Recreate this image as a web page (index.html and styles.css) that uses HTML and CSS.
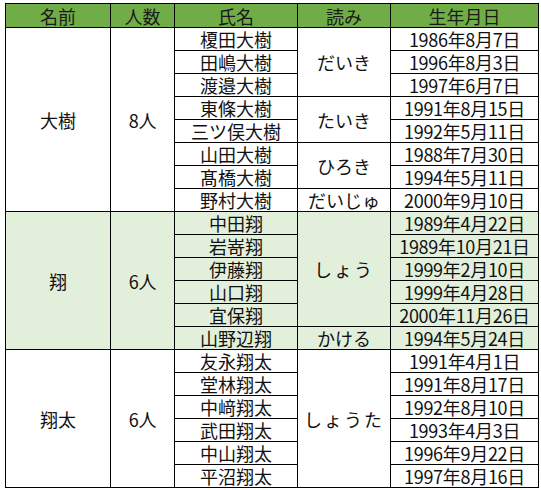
FILE: index.html
```html
<!DOCTYPE html>
<html lang="ja">
<head>
<meta charset="utf-8">
<title>名前一覧</title>
<link rel="stylesheet" href="styles.css">
</head>
<body>
<table class="roster">
  <colgroup>
    <col class="c-name">
    <col class="c-count">
    <col class="c-full">
    <col class="c-read">
    <col class="c-birth">
  </colgroup>
  <thead>
    <tr><th>名前</th><th>人数</th><th>氏名</th><th>読み</th><th>生年月日</th></tr>
  </thead>
  <tbody>
    <tr><td rowspan="8">大樹</td><td rowspan="8" class="num">8人</td><td>榎田大樹</td><td rowspan="3">だいき</td><td class="num">1986年8月7日</td></tr>
    <tr><td>田嶋大樹</td><td class="num">1996年8月3日</td></tr>
    <tr><td>渡邉大樹</td><td class="num">1997年6月7日</td></tr>
    <tr><td>東條大樹</td><td rowspan="2">たいき</td><td class="num">1991年8月15日</td></tr>
    <tr><td>三ツ俣大樹</td><td class="num">1992年5月11日</td></tr>
    <tr><td>山田大樹</td><td rowspan="2">ひろき</td><td class="num">1988年7月30日</td></tr>
    <tr><td>髙橋大樹</td><td class="num">1994年5月11日</td></tr>
    <tr><td>野村大樹</td><td>だいじゅ</td><td class="num">2000年9月10日</td></tr>
  </tbody>
  <tbody class="shaded">
    <tr><td rowspan="6">翔</td><td rowspan="6" class="num">6人</td><td>中田翔</td><td rowspan="5" class="wide">しょう</td><td class="num">1989年4月22日</td></tr>
    <tr><td>岩嵜翔</td><td class="num">1989年10月21日</td></tr>
    <tr><td>伊藤翔</td><td class="num">1999年2月10日</td></tr>
    <tr><td>山口翔</td><td class="num">1999年4月28日</td></tr>
    <tr><td>宜保翔</td><td class="num">2000年11月26日</td></tr>
    <tr><td>山野辺翔</td><td>かける</td><td class="num">1994年5月24日</td></tr>
  </tbody>
  <tbody>
    <tr><td rowspan="6">翔太</td><td rowspan="6" class="num">6人</td><td>友永翔太</td><td rowspan="6" class="wide">しょうた</td><td class="num">1991年4月1日</td></tr>
    <tr><td>堂林翔太</td><td class="num">1991年8月17日</td></tr>
    <tr><td>中﨑翔太</td><td class="num">1992年8月10日</td></tr>
    <tr><td>武田翔太</td><td class="num">1993年4月3日</td></tr>
    <tr><td>中山翔太</td><td class="num">1996年9月22日</td></tr>
    <tr><td>平沼翔太</td><td class="num">1997年8月16日</td></tr>
  </tbody>
</table>
</body>
</html>
```

FILE: styles.css
```css
html, body {
  margin: 0;
  padding: 0;
  background: #ffffff;
}

body {
  padding: 3px 0 0 5px;
  font-family: "Noto Sans CJK JP", "Noto Sans", sans-serif;
  color: #111111;
}

.roster {
  border-collapse: collapse;
  table-layout: fixed;
  width: 533px;
  font-size: 18px;
}

.c-name { width: 105px; }
.c-count { width: 64px; }
.c-full { width: 123px; }
.c-read { width: 93px; }
.c-birth { width: 148px; }

.roster th,
.roster td {
  border: 1px solid #000000;
  padding: 0;
  text-align: center;
  vertical-align: middle;
  line-height: 20px;
  white-space: nowrap;
  overflow: hidden;
}

.roster th {
  height: 23px;
  background: #70ad47;
  font-weight: 400;
  color: #1a1a1a;
}

.roster td {
  height: 22px;
}

.shaded td {
  background: #e2efda;
}

.num {
  letter-spacing: -0.3px;
}

.wide {
  letter-spacing: 2px;
}
```
